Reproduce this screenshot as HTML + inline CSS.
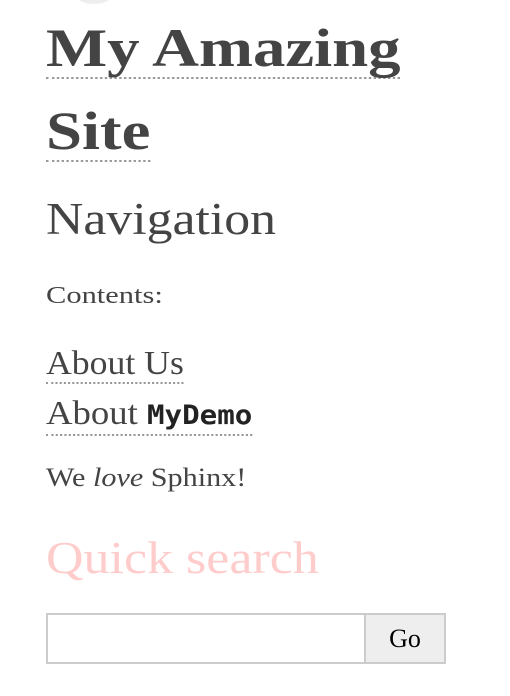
<!DOCTYPE html>
<html><head><meta charset="utf-8"><style>
body{margin:0;width:510px;height:696px;background:#fff;position:relative;overflow:hidden;font-family:"Liberation Serif",serif;color:#444}
.a{position:absolute;left:46px;white-space:nowrap;line-height:1;transform-origin:0 0}
.u{border-bottom:2px dotted #999}
.logo{position:absolute;left:70px;top:-30px;width:48px;height:34px;border-radius:50%;background:#eee}
</style></head><body>
<div class="logo"></div>
<div class="a" style="top:19px;font-size:54px;font-weight:bold;transform:scaleX(1.2)"><span class="u" style="display:inline-block;line-height:58px;">My Amazing</span></div>
<div class="a" style="top:102px;font-size:54px;font-weight:bold;transform:scaleX(1.2)"><span class="u" style="display:inline-block;line-height:58px;">Site</span></div>
<div class="a" style="top:197px;font-size:45px;transform:scaleX(1.15)">Navigation</div>
<div class="a" style="top:284px;font-size:24px;transform:scaleX(1.27)">Contents:</div>
<div class="a" style="top:346px;font-size:34px;transform:scaleX(1.05)"><span class="u" style="display:inline-block;line-height:36px;">About Us</span></div>
<div class="a" style="top:396px;font-size:34px;transform:scaleX(1.08)"><span class="u" style="display:inline-block;line-height:36px;">About <b style="font-family:'DejaVu Sans Mono',monospace;font-size:27px;color:#222">MyDemo</b></span></div>
<div class="a" style="top:465px;font-size:26px;transform:scaleX(1.16)">We <i>love</i> Sphinx!</div>
<div class="a" style="top:535px;font-size:46px;color:#fcc;transform:scaleX(1.13)">Quick search</div>
<div style="position:absolute;left:46px;top:613px;width:317px;height:47px;border:2px solid #ccc;background:#fff"></div>
<div style="position:absolute;left:364px;top:613px;width:78px;height:47px;border:2px solid #ccc;background:#eee;font-size:26px;color:#000;text-align:center;line-height:47px">Go</div>
</body></html>
